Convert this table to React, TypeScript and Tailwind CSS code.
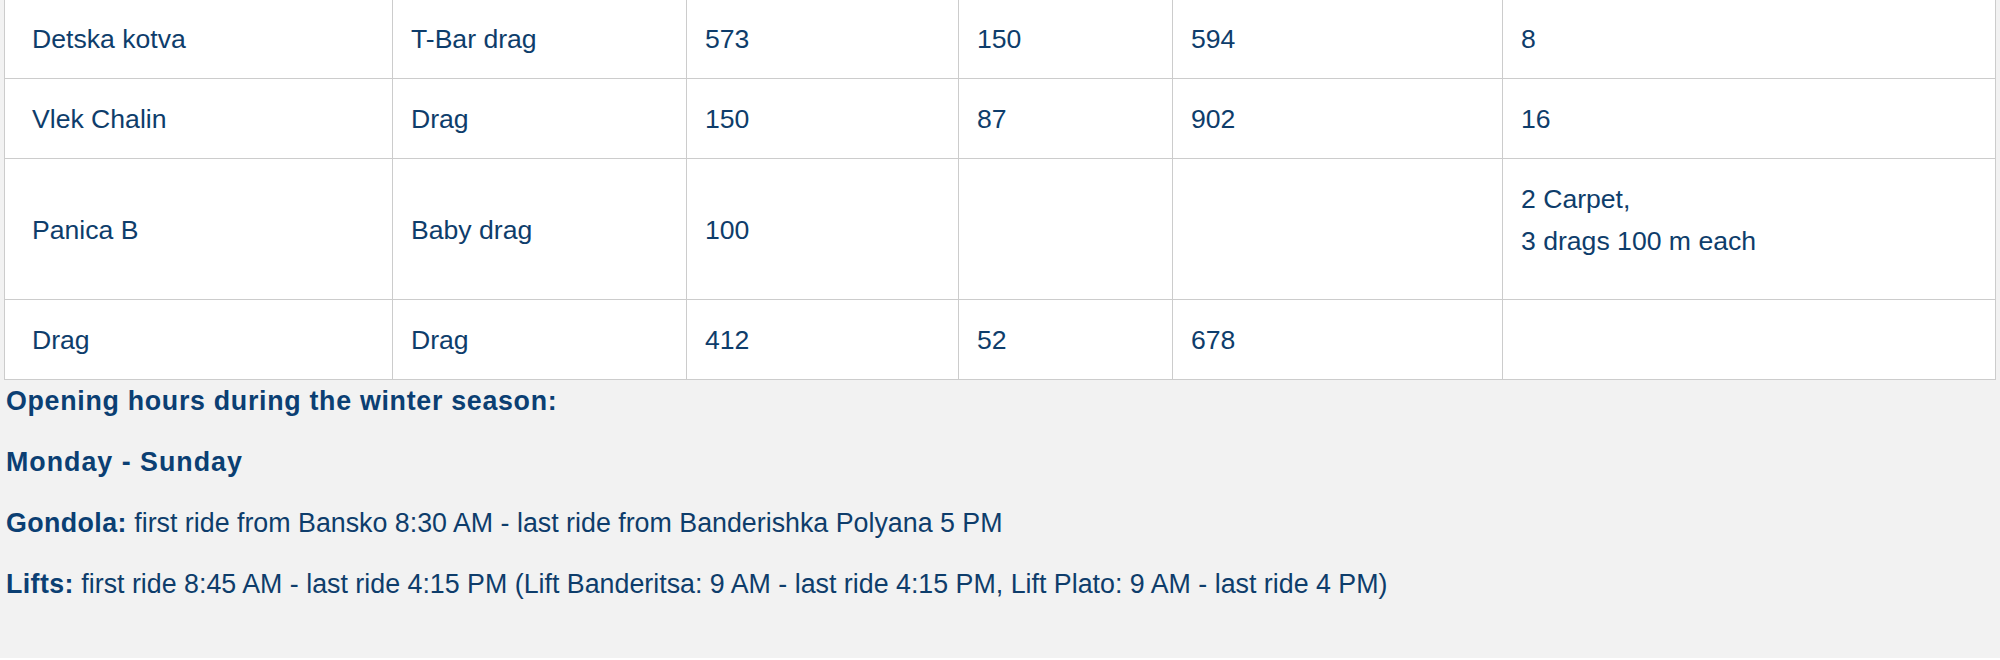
const rows: { name: string; type: string; length: string; vertical: string; capacity: string; note: string[] }[] = [
  { name: "Detska kotva", type: "T-Bar drag", length: "573", vertical: "150", capacity: "594", note: ["8"] },
  { name: "Vlek Chalin", type: "Drag", length: "150", vertical: "87", capacity: "902", note: ["16"] },
  { name: "Panica B", type: "Baby drag", length: "100", vertical: "", capacity: "", note: ["2 Carpet,", "3 drags 100 m each"] },
  { name: "Drag", type: "Drag", length: "412", vertical: "52", capacity: "678", note: [""] },
];

export default function App() {
  const cell = "border border-[#cccccc] bg-white align-middle pt-[19px] pb-[18px] pl-[18px] pr-[18px] leading-[42px]";

  return (
    <div
      className="min-h-[660px] bg-[#f2f2f2] pl-[4px] text-[26.6px] text-[#0e3d6b]"
      style={{ fontFamily: '"Liberation Sans", Arial, sans-serif' }}
    >
      <table className="-mt-[2px] w-[1991px] table-fixed border-collapse">
        <colgroup>
          <col className="w-[388px]" />
          <col className="w-[294px]" />
          <col className="w-[272px]" />
          <col className="w-[214px]" />
          <col className="w-[330px]" />
          <col className="w-[493px]" />
        </colgroup>
        <tbody>
          {rows.map((r) => (
            <tr key={r.name + r.type}>
              <td className={cell + " !pl-[27px]"}>{r.name}</td>
              <td className={cell}>{r.type}</td>
              <td className={cell}>{r.length}</td>
              <td className={cell}>{r.vertical}</td>
              <td className={cell}>{r.capacity}</td>
              <td className={cell}>
                {r.note.length > 1 ? (
                  <p className="mb-[19px]">
                    {r.note[0]}
                    <br />
                    {r.note[1]}
                  </p>
                ) : (
                  r.note[0]
                )}
              </td>
            </tr>
          ))}
        </tbody>
      </table>

      <div className="pl-[2px] text-[26.8px] leading-[42px]">
        <p className="mb-[19px] font-bold tracking-[0.7px] text-[#0b3f73]">Opening hours during the winter season:</p>
        <p className="mb-[19px] font-bold tracking-[1px] text-[#0b3f73]">Monday - Sunday</p>
        <p className="mb-[19px]">
          <strong className="tracking-[0.4px] text-[#0b3f73]">Gondola:</strong> first ride from Bansko 8:30 AM - last ride from Banderishka Polyana 5 PM
        </p>
        <p className="mb-[19px]">
          <strong className="tracking-[0.4px] text-[#0b3f73]">Lifts:</strong> first ride 8:45 AM - last ride 4:15 PM (Lift Banderitsa: 9 AM - last ride 4:15 PM, Lift Plato: 9 AM - last ride 4 PM)
        </p>
      </div>
    </div>
  );
}
